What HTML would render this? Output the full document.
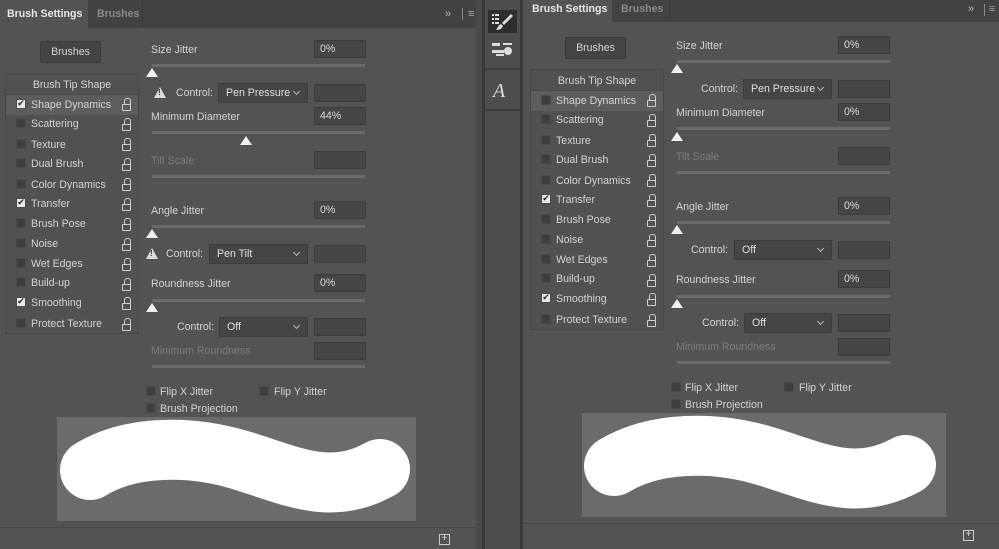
<!DOCTYPE html>
<html><head><meta charset="utf-8"><style>
*{box-sizing:border-box;margin:0;padding:0}
body{width:999px;height:549px;background:#535353;position:relative;overflow:hidden;font-family:"Liberation Sans",sans-serif;font-size:10.6px;color:#d4d4d4}
.a{position:absolute;white-space:nowrap;line-height:16px}
.tabbar{position:absolute;top:0;background:#424242}
.fld{position:absolute;width:52px;height:18px;background:#454545;border:1px solid #3c3c3c;padding:2px 0 0 5px;color:#dcdcdc}
.trk{position:absolute;height:3px;background:#6a6a6a;width:213px}
.thumb{position:absolute;width:0;height:0;border-left:6px solid transparent;border-right:6px solid transparent;border-bottom:9px solid #f0f0f0}
.sel{position:absolute;height:20px;background:#454545;border:1px solid #3c3c3c;padding:3px 0 0 7px;color:#e0e0e0}
.sel:after{content:"";position:absolute;right:8px;top:5px;width:4px;height:4px;border-right:1px solid #bbb;border-bottom:1px solid #bbb;transform:rotate(45deg)}
.dim{color:#7c7c7c}
.list{position:absolute;border:1px solid #474747;background:#515151}
.row{position:absolute;left:0;width:132px;height:20px}
.row.hl{background:#5d5d5d}
.cb{position:absolute;width:10px;height:10px;background:#3e3e3e;border:1px solid #4a4a4a;border-radius:1px;line-height:9px;text-align:center;font-size:9px;color:#2a2a2a;font-family:"DejaVu Sans",sans-serif}
.cb.on{background:#e8e8e8}
.lk{position:absolute;width:9px;height:7px;border:1.5px solid #cfcfcf;border-radius:1px}
.lk:before{content:"";position:absolute;left:1px;top:-7px;width:5px;height:6px;border:1.5px solid #cfcfcf;border-bottom:none;border-radius:3px 3px 0 0}
.warn{position:absolute;width:0;height:0;border-left:6px solid transparent;border-right:6px solid transparent;border-bottom:11px solid #dcdcdc}
.warn:after{content:"!";position:absolute;left:-2px;top:1px;font-size:8px;font-weight:bold;color:#333;line-height:10px}
.btn{position:absolute;background:#444;border:1px solid #3a3a3a;border-radius:2px;text-align:center;padding-top:4px}
.pv{position:absolute;background:#6b6b6b}
</style></head><body>

<!-- LEFT PANEL -->
<div class="tabbar" style="left:0;width:476px;height:28px"></div>
<div class="a" style="left:0;top:0;width:88px;height:28px;background:#535353"></div>
<div class="a" style="left:88px;top:0;width:55px;height:28px;border-right:1px solid #3a3a3a"></div>
<div class="a" style="left:7px;top:6px;font-weight:bold;color:#e6e6e6">Brush Settings</div>
<div class="a" style="left:97px;top:6px;font-weight:bold;color:#8a8a8a">Brushes</div>
<div class="a" style="left:445px;top:6px;color:#bbb;font-size:11px">»</div>
<div class="a" style="left:462px;top:8px;width:1px;height:12px;background:#888"></div>
<div class="a" style="left:468px;top:6px;color:#aaa;font-size:11px">≡</div>
<div class="a" style="left:0;top:527px;width:476px;height:1px;background:#474747"></div>
<div class="a" style="left:439px;top:534px;width:11px;height:11px;border:1px solid #ccc;text-align:center;line-height:8px;font-size:10px;color:#ddd">+</div>

<div class="btn" style="left:40px;top:41px;width:61px;height:22px">Brushes</div>
<div class="list" style="left:5px;top:73px;width:134px;height:261px">
 <div class="a" style="left:0;top:3px;width:132px;text-align:center">Brush Tip Shape</div>
 <div class="a" style="left:0;top:20px;width:132px;height:1px;background:#474747"></div>
 <div class="row hl" style="top:21px"></div>
</div>
<div class="a" style="left:151px;top:42px">Size Jitter</div>
<div class="fld" style="left:314px;top:40px">0%</div>
<div class="trk" style="left:152px;top:64px"></div>
<div class="thumb" style="left:146px;top:68px"></div>
<div class="warn" style="left:154px;top:87px"></div>
<div class="a" style="left:176px;top:85px">Control:</div>
<div class="sel" style="left:218px;top:83px;width:90px">Pen Pressure</div>
<div class="fld" style="left:314px;top:84px"></div>
<div class="a" style="left:151px;top:109px">Minimum Diameter</div>
<div class="fld" style="left:314px;top:107px">44%</div>
<div class="trk" style="left:152px;top:131px"></div>
<div class="thumb" style="left:240px;top:136px"></div>
<div class="a dim" style="left:151px;top:153px">Tilt Scale</div>
<div class="fld" style="left:314px;top:151px"></div>
<div class="trk" style="left:152px;top:175px"></div>
<div class="a" style="left:151px;top:203px">Angle Jitter</div>
<div class="fld" style="left:314px;top:201px">0%</div>
<div class="trk" style="left:152px;top:225px"></div>
<div class="thumb" style="left:146px;top:229px"></div>
<div class="warn" style="left:146px;top:248px"></div>
<div class="a" style="left:166px;top:246px">Control:</div>
<div class="sel" style="left:209px;top:244px;width:99px">Pen Tilt</div>
<div class="fld" style="left:314px;top:245px"></div>
<div class="a" style="left:151px;top:276px">Roundness Jitter</div>
<div class="fld" style="left:314px;top:274px">0%</div>
<div class="trk" style="left:152px;top:299px"></div>
<div class="thumb" style="left:146px;top:303px"></div>
<div class="a" style="left:177px;top:319px">Control:</div>
<div class="sel" style="left:219px;top:317px;width:89px">Off</div>
<div class="fld" style="left:314px;top:318px"></div>
<div class="a dim" style="left:151px;top:343px">Minimum Roundness</div>
<div class="fld" style="left:314px;top:342px"></div>
<div class="trk" style="left:152px;top:365px"></div>
<div class="cb" style="left:146px;top:386px"></div><div class="a" style="left:160px;top:384px">Flip X Jitter</div>
<div class="cb" style="left:259px;top:386px"></div><div class="a" style="left:274px;top:384px">Flip Y Jitter</div>
<div class="cb" style="left:146px;top:403px"></div><div class="a" style="left:160px;top:401px">Brush Projection</div>
<div class="pv" style="left:57px;top:417px;width:359px;height:104px"></div>

<!-- STRIP -->
<div class="a" style="left:476px;top:0;width:6px;height:549px;background:#4a4a4a"></div>
<div class="a" style="left:482px;top:0;width:3px;height:549px;background:#383838"></div>
<div class="a" style="left:485px;top:0;width:35px;height:549px;background:#4d4d4d"></div>
<div class="a" style="left:520px;top:0;width:3px;height:549px;background:#383838"></div>
<div class="a" style="left:485px;top:68px;width:35px;height:2px;background:#3e3e3e"></div>
<div class="a" style="left:485px;top:109px;width:35px;height:2px;background:#3e3e3e"></div>
<div class="a" style="left:488px;top:10px;width:29px;height:23px;background:#2e2e2e"></div>
<svg class="a" style="left:488px;top:10px" width="29" height="60" viewBox="0 0 29 60">
<g fill="#ddd"><rect x="4" y="4" width="2" height="2"/><rect x="7" y="4" width="4" height="2"/><rect x="4" y="8" width="2" height="2"/><rect x="7" y="8" width="4" height="2"/><rect x="4" y="12" width="2" height="2"/><rect x="7" y="12" width="4" height="2"/>
<path d="M23 4 L25 6 L16 15 L14 13Z"/><path d="M13 14 L15 16 C14 19,11 20,8 20 C10 18,10 15,13 14Z"/>
<rect x="4" y="33" width="8" height="3"/><rect x="15" y="33" width="9" height="2"/><rect x="4" y="40" width="12" height="3"/><ellipse cx="20" cy="41" rx="4" ry="4"/><rect x="8" y="44" width="8" height="2"/></g></svg>
<div class="a" style="left:493px;top:80px;font-family:'Liberation Serif',serif;font-style:italic;font-size:20px;color:#ddd;line-height:22px">A</div>

<!-- RIGHT PANEL -->
<div class="tabbar" style="left:523px;width:476px;height:22px"></div>
<div class="a" style="left:523px;top:0;width:89px;height:22px;background:#535353"></div>
<div class="a" style="left:612px;top:0;width:58px;height:22px;border-right:1px solid #3a3a3a"></div>
<div class="a" style="left:532px;top:1px;font-weight:bold;color:#e6e6e6">Brush Settings</div>
<div class="a" style="left:621px;top:1px;font-weight:bold;color:#8a8a8a">Brushes</div>
<div class="a" style="left:968px;top:1px;color:#bbb">»</div>
<div class="a" style="left:984px;top:4px;width:1px;height:12px;background:#888"></div>
<div class="a" style="left:989px;top:1px;color:#aaa">≡</div>
<div class="a" style="left:523px;top:523px;width:476px;height:1px;background:#474747"></div>
<div class="a" style="left:963px;top:530px;width:11px;height:11px;border:1px solid #ccc;text-align:center;line-height:8px;font-size:10px;color:#ddd">+</div>

<div class="btn" style="left:565px;top:37px;width:61px;height:22px">Brushes</div>
<div class="list" style="left:530px;top:69px;width:134px;height:261px">
 <div class="a" style="left:0;top:3px;width:132px;text-align:center">Brush Tip Shape</div>
 <div class="a" style="left:0;top:20px;width:132px;height:1px;background:#474747"></div>
 <div class="row hl" style="top:21px"></div>
</div>
<div class="a" style="left:676px;top:38px">Size Jitter</div>
<div class="fld" style="left:838px;top:36px">0%</div>
<div class="trk" style="left:677px;top:60px"></div>
<div class="thumb" style="left:671px;top:64px"></div>
<div class="a" style="left:701px;top:81px">Control:</div>
<div class="sel" style="left:743px;top:79px;width:89px">Pen Pressure</div>
<div class="fld" style="left:838px;top:80px"></div>
<div class="a" style="left:676px;top:105px">Minimum Diameter</div>
<div class="fld" style="left:838px;top:103px">0%</div>
<div class="trk" style="left:677px;top:127px"></div>
<div class="thumb" style="left:671px;top:132px"></div>
<div class="a dim" style="left:676px;top:149px">Tilt Scale</div>
<div class="fld" style="left:838px;top:147px"></div>
<div class="trk" style="left:677px;top:171px"></div>
<div class="a" style="left:676px;top:199px">Angle Jitter</div>
<div class="fld" style="left:838px;top:197px">0%</div>
<div class="trk" style="left:677px;top:221px"></div>
<div class="thumb" style="left:671px;top:225px"></div>
<div class="a" style="left:691px;top:242px">Control:</div>
<div class="sel" style="left:734px;top:240px;width:98px">Off</div>
<div class="fld" style="left:838px;top:241px"></div>
<div class="a" style="left:676px;top:272px">Roundness Jitter</div>
<div class="fld" style="left:838px;top:270px">0%</div>
<div class="trk" style="left:677px;top:295px"></div>
<div class="thumb" style="left:671px;top:299px"></div>
<div class="a" style="left:702px;top:315px">Control:</div>
<div class="sel" style="left:744px;top:313px;width:88px">Off</div>
<div class="fld" style="left:838px;top:314px"></div>
<div class="a dim" style="left:676px;top:339px">Minimum Roundness</div>
<div class="fld" style="left:838px;top:338px"></div>
<div class="trk" style="left:677px;top:361px"></div>
<div class="cb" style="left:671px;top:382px"></div><div class="a" style="left:685px;top:380px">Flip X Jitter</div>
<div class="cb" style="left:784px;top:382px"></div><div class="a" style="left:799px;top:380px">Flip Y Jitter</div>
<div class="cb" style="left:671px;top:399px"></div><div class="a" style="left:685px;top:397px">Brush Projection</div>
<div class="pv" style="left:582px;top:413px;width:364px;height:104px"></div>

<svg class="a" style="left:0;top:0" width="999" height="549"><path d="M90 470 C130 445,190 445,240 460 S330 497,380 469" stroke="#fff" stroke-width="60" fill="none" stroke-linecap="round"/>
<path d="M614 466 C655 441,715 441,765 456 S855 493,906 465" stroke="#fff" stroke-width="60" fill="none" stroke-linecap="round"/></svg>

<!-- LIST ROWS LEFT -->
<div class="cb on" style="left:16px;top:99px">✔</div><div class="a" style="left:31px;top:97px">Shape Dynamics</div><div class="lk" style="left:122px;top:104px"></div>
<div class="cb" style="left:16px;top:118px"></div><div class="a" style="left:31px;top:116px">Scattering</div><div class="lk" style="left:122px;top:124px"></div>
<div class="cb" style="left:16px;top:139px"></div><div class="a" style="left:31px;top:137px">Texture</div><div class="lk" style="left:122px;top:144px"></div>
<div class="cb" style="left:16px;top:158px"></div><div class="a" style="left:31px;top:156px">Dual Brush</div><div class="lk" style="left:122px;top:164px"></div>
<div class="cb" style="left:16px;top:179px"></div><div class="a" style="left:31px;top:177px">Color Dynamics</div><div class="lk" style="left:122px;top:184px"></div>
<div class="cb on" style="left:16px;top:198px">✔</div><div class="a" style="left:31px;top:196px">Transfer</div><div class="lk" style="left:122px;top:204px"></div>
<div class="cb" style="left:16px;top:218px"></div><div class="a" style="left:31px;top:216px">Brush Pose</div><div class="lk" style="left:122px;top:224px"></div>
<div class="cb" style="left:16px;top:238px"></div><div class="a" style="left:31px;top:236px">Noise</div><div class="lk" style="left:122px;top:244px"></div>
<div class="cb" style="left:16px;top:258px"></div><div class="a" style="left:31px;top:256px">Wet Edges</div><div class="lk" style="left:122px;top:264px"></div>
<div class="cb" style="left:16px;top:277px"></div><div class="a" style="left:31px;top:275px">Build-up</div><div class="lk" style="left:122px;top:284px"></div>
<div class="cb on" style="left:16px;top:297px">✔</div><div class="a" style="left:31px;top:295px">Smoothing</div><div class="lk" style="left:122px;top:303px"></div>
<div class="cb" style="left:16px;top:318px"></div><div class="a" style="left:31px;top:316px">Protect Texture</div><div class="lk" style="left:122px;top:324px"></div>

<!-- LIST ROWS RIGHT -->
<div class="cb" style="left:541px;top:95px"></div><div class="a" style="left:556px;top:93px">Shape Dynamics</div><div class="lk" style="left:647px;top:100px"></div>
<div class="cb" style="left:541px;top:114px"></div><div class="a" style="left:556px;top:112px">Scattering</div><div class="lk" style="left:647px;top:120px"></div>
<div class="cb" style="left:541px;top:135px"></div><div class="a" style="left:556px;top:133px">Texture</div><div class="lk" style="left:647px;top:140px"></div>
<div class="cb" style="left:541px;top:154px"></div><div class="a" style="left:556px;top:152px">Dual Brush</div><div class="lk" style="left:647px;top:160px"></div>
<div class="cb" style="left:541px;top:175px"></div><div class="a" style="left:556px;top:173px">Color Dynamics</div><div class="lk" style="left:647px;top:180px"></div>
<div class="cb on" style="left:541px;top:194px">✔</div><div class="a" style="left:556px;top:192px">Transfer</div><div class="lk" style="left:647px;top:200px"></div>
<div class="cb" style="left:541px;top:214px"></div><div class="a" style="left:556px;top:212px">Brush Pose</div><div class="lk" style="left:647px;top:220px"></div>
<div class="cb" style="left:541px;top:234px"></div><div class="a" style="left:556px;top:232px">Noise</div><div class="lk" style="left:647px;top:240px"></div>
<div class="cb" style="left:541px;top:254px"></div><div class="a" style="left:556px;top:252px">Wet Edges</div><div class="lk" style="left:647px;top:260px"></div>
<div class="cb" style="left:541px;top:273px"></div><div class="a" style="left:556px;top:271px">Build-up</div><div class="lk" style="left:647px;top:280px"></div>
<div class="cb on" style="left:541px;top:293px">✔</div><div class="a" style="left:556px;top:291px">Smoothing</div><div class="lk" style="left:647px;top:299px"></div>
<div class="cb" style="left:541px;top:314px"></div><div class="a" style="left:556px;top:312px">Protect Texture</div><div class="lk" style="left:647px;top:320px"></div>
</body></html>
